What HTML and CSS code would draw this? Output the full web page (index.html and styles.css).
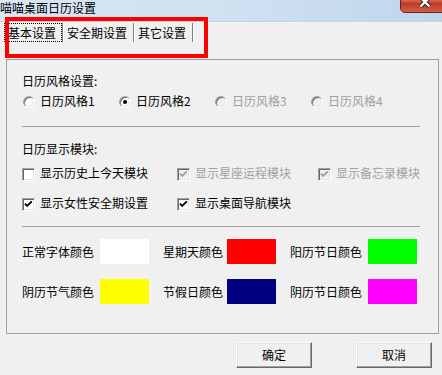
FILE: index.html
```html
<!DOCTYPE html>
<html lang="zh-CN">
<head>
<meta charset="utf-8">
<title>喵喵桌面日历设置</title>
<link rel="stylesheet" href="styles.css">
</head>
<body>
<div class="window">
  <div class="titlebar">
    <span class="title">喵喵桌面日历设置</span>
    <span class="close">
      <svg width="48" height="21" viewBox="0 0 48 21">
        <path d="M19.5 4.5 L28.5 13.5 M28.5 4.5 L19.5 13.5" stroke="#3a1a14" stroke-width="4.2" fill="none"/>
        <path d="M19.5 4.5 L28.5 13.5 M28.5 4.5 L19.5 13.5" stroke="#ffffff" stroke-width="2.4" fill="none"/>
      </svg>
    </span>
  </div>
  <div class="client">
    <div class="tabs">
      <div class="tab"><span class="tab-label active">基本设置</span></div>
      <div class="tab"><span class="tab-label">安全期设置</span></div>
      <div class="tab"><span class="tab-label">其它设置</span></div>
    </div>
    <div class="panel">
      <div class="label">日历风格设置:</div>
      <div class="radios">
        <div class="opt"><span class="radio"></span><span>日历风格1</span></div>
        <div class="opt"><span class="radio on"></span><span>日历风格2</span></div>
        <div class="opt disabled"><span class="radio"></span><span>日历风格3</span></div>
        <div class="opt disabled"><span class="radio"></span><span>日历风格4</span></div>
      </div>
      <div class="sep sep-1"></div>
      <div class="label label-2">日历显示模块:</div>
      <div class="checks">
        <div class="opt"><span class="cb"></span><span>显示历史上今天模块</span></div>
        <div class="opt disabled"><span class="cb"><svg width="11" height="11" viewBox="0 0 11 11"><path d="M2 4.6 L4.2 6.9 L8.8 2.3" stroke="#a0a0a0" stroke-width="1.9" fill="none"/></svg></span><span>显示星座运程模块</span></div>
        <div class="opt disabled"><span class="cb"><svg width="11" height="11" viewBox="0 0 11 11"><path d="M2 4.6 L4.2 6.9 L8.8 2.3" stroke="#a0a0a0" stroke-width="1.9" fill="none"/></svg></span><span>显示备忘录模块</span></div>
        <div class="opt"><span class="cb"><svg width="11" height="11" viewBox="0 0 11 11"><path d="M2 4.6 L4.2 6.9 L8.8 2.3" stroke="#000" stroke-width="1.9" fill="none"/></svg></span><span>显示女性安全期设置</span></div>
        <div class="opt"><span class="cb"><svg width="11" height="11" viewBox="0 0 11 11"><path d="M2 4.6 L4.2 6.9 L8.8 2.3" stroke="#000" stroke-width="1.9" fill="none"/></svg></span><span>显示桌面导航模块</span></div>
      </div>
      <div class="sep sep-2"></div>
      <div class="colors">
        <span>正常字体颜色</span><span class="swatch white"></span>
        <span>星期天颜色</span><span class="swatch red"></span>
        <span>阳历节日颜色</span><span class="swatch lime"></span>
        <span>阴历节气颜色</span><span class="swatch yellow"></span>
        <span>节假日颜色</span><span class="swatch navy"></span>
        <span>阴历节日颜色</span><span class="swatch magenta"></span>
      </div>
    </div>
    <div class="buttons">
      <button class="btn">确定</button>
      <button class="btn">取消</button>
    </div>
  </div>
  <div class="highlight"></div>
</div>
</body>
</html>
```
FILE: styles.css
```css
* { box-sizing: border-box; }
html, body { margin: 0; padding: 0; }
body {
  width: 442px;
  height: 375px;
  overflow: hidden;
  background: #f0f0f0;
  font-family: "Noto Sans CJK SC", "Noto Sans", sans-serif;
  font-size: 12px;
  line-height: 16px;
  color: #000;
}
.window {
  position: relative;
  width: 442px;
  height: 375px;
  background: #f0f0f0;
}
.titlebar {
  height: 22px;
  display: flex;
  align-items: flex-start;
  overflow: hidden;
  background: linear-gradient(to right, #dae7f4 0%, #cfe0f1 55%, #bfd5ec 100%);
  border-bottom: 1px solid #c6d4e2;
}
.title { line-height: 16px; }
.close {
  margin-left: auto;
  margin-top: -8px;
  margin-right: -8px;
  width: 50px;
  height: 21px;
  border: 1px solid #6e2419;
  border-radius: 0 0 5px 5px;
  background: linear-gradient(#e39a8a 0%, #cf5a45 45%, #c03a26 55%, #d0604a 100%);
  display: flex;
}
.client { display: flex; flex-direction: column; }
.tabs {
  display: flex;
  margin-top: 1px;
  padding-left: 4px;
  height: 19px;
}
.tab {
  height: 19px;
  border-right: 1px solid #808080;
  box-shadow: 1px 0 0 #fff;
  margin-right: 1px;
  display: flex;
}
.tab-label {
  display: block;
  height: 19px;
  line-height: 17px;
  padding: 0 5px 0 2px;
  border: 1px solid transparent;
}
.tab-label.active {
  padding-left: 3px;
  border: 1px dotted #000;
}
.panel {
  margin: 17px 0 0 6px;
  width: 433px;
  height: 275px;
  border: 1px solid #a0a0a0;
  padding: 13px 18px 0 15px;
  display: flex;
  flex-direction: column;
}
.label { height: 16px; }
.label-2 { margin-top: 14px; }
.opt {
  display: flex;
  align-items: center;
  gap: 5px;
  height: 16px;
  white-space: nowrap;
}
.opt.disabled { color: #a0a0a0; }
.radios {
  margin-top: 4px;
  display: grid;
  grid-template-columns: 96px 96px 96px auto;
}
.radio {
  margin-left: 1px;
  margin-top: 2px;
  width: 12px;
  height: 12px;
  border-radius: 50%;
  border: 1px solid;
  border-color: #a0a0a0 #ffffff #ffffff #a0a0a0;
  box-shadow: inset 1px 1px 0 #696969, inset -1px -1px 0 #e3e3e3;
  background: #fff;
  position: relative;
}
.radio.on::after {
  content: "";
  position: absolute;
  left: 3px;
  top: 3px;
  width: 4px;
  height: 4px;
  border-radius: 50%;
  background: #000;
}
.disabled .radio { background: #f0f0f0; }
.sep { height: 1px; background: #a0a0a0; width: 398px; }
.sep-1 { margin-top: 17px; }
.sep-2 { margin-top: 15px; }
.checks {
  margin-top: 8px;
  display: grid;
  grid-template-columns: 155px 141px auto;
  row-gap: 14px;
}
.cb {
  width: 13px;
  height: 13px;
  margin-top: 2px;
  border: 1px solid;
  border-color: #a0a0a0 #ffffff #ffffff #a0a0a0;
  box-shadow: inset 1px 1px 0 #696969, inset -1px -1px 0 #e3e3e3;
  background: #fff;
  display: flex;
}
.disabled .cb { background: #f0f0f0; }
.colors {
  margin-top: 12px;
  display: grid;
  grid-template-columns: 78px 63px 64px 63px 78px 49px;
  grid-auto-rows: 25px;
  row-gap: 15px;
  align-items: center;
  white-space: nowrap;
}
.swatch { display: block; width: 49px; height: 25px; }
.white { background: #ffffff; }
.red { background: #ff0000; }
.lime { background: #00ff00; }
.yellow { background: #ffff00; }
.navy { background: #000080; }
.magenta { background: #ff00ff; }
.buttons {
  margin-top: 8px;
  padding-right: 10px;
  display: flex;
  justify-content: flex-end;
  gap: 44px;
}
.btn {
  width: 76px;
  height: 26px;
  padding: 0;
  font: inherit;
  color: #000;
  background: #f0f0f0;
  border: 1px solid;
  border-color: #ffffff #696969 #696969 #ffffff;
  box-shadow: inset -1px -1px 0 #a0a0a0, inset 1px 1px 0 #e3e3e3;
}
.highlight {
  position: absolute;
  left: 5px;
  top: 17px;
  width: 203px;
  height: 41px;
  border: 4px solid #ff0000;
}
```
